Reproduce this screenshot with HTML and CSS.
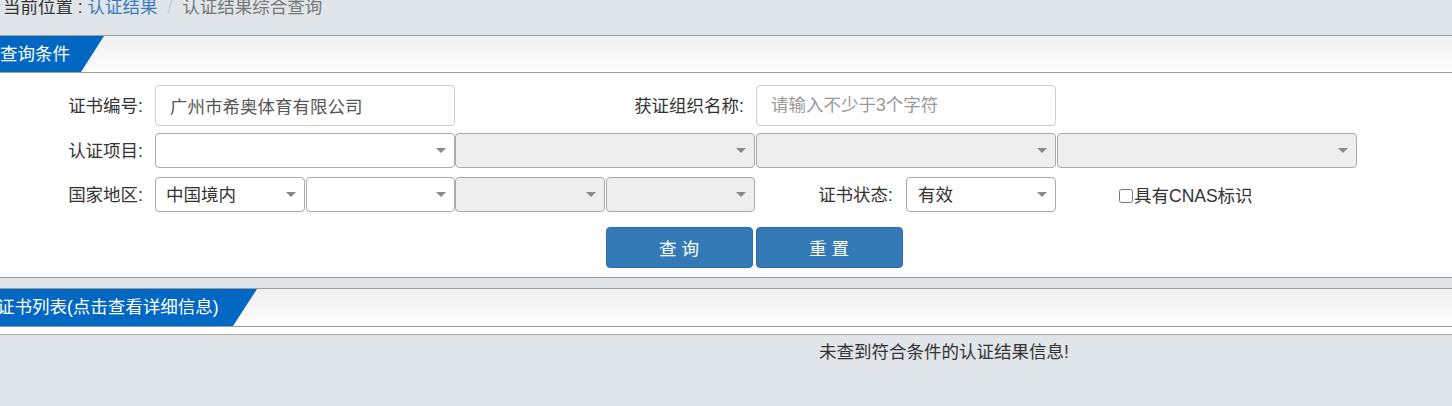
FILE: index.html
```html
<!DOCTYPE html>
<html>
  <head>
    <meta charset="UTF-8">
    <title>认证结果综合查询</title>
    <link rel="stylesheet" href="styles.css">
  </head>
  <body>

    <div class="crumb">
      <span class="crumb-here">当前位置 :</span>
      <a class="crumb-link" href="#">认证结果</a>
      <span class="crumb-sep">/</span>
      <span class="crumb-last">认证结果综合查询</span>
    </div>

    <div class="panel">
      <div class="panel-head">
        <div class="tab">查询条件</div>
      </div>
      <form class="panel-body" name="query">
        <div class="row row-1">
          <label class="lbl">证书编号:</label>
          <input class="txt" type="text" value="广州市希奥体育有限公司">
          <label class="lbl">获证组织名称:</label>
          <input class="txt" type="text" placeholder="请输入不少于3个字符">
        </div>

        <div class="row row-2">
          <label class="lbl">认证项目:</label>
          <div class="sel"><span></span><i class="arrow"></i></div>
          <div class="sel off"><span></span><i class="arrow"></i></div>
          <div class="sel off"><span></span><i class="arrow"></i></div>
          <div class="sel off"><span></span><i class="arrow"></i></div>
        </div>

        <div class="row row-3">
          <label class="lbl">国家地区:</label>
          <div class="pair">
            <div class="sel"><span>中国境内</span><i class="arrow"></i></div>
            <div class="sel"><span></span><i class="arrow"></i></div>
          </div>
          <div class="pair">
            <div class="sel off"><span></span><i class="arrow"></i></div>
            <div class="sel off"><span></span><i class="arrow"></i></div>
          </div>
          <div class="pair">
            <label class="lbl lbl-in">证书状态:</label>
            <div class="sel half"><span>有效</span><i class="arrow"></i></div>
          </div>
          <label class="check"><input type="checkbox">具有CNAS标识</label>
        </div>

        <div class="row row-4">
          <div class="btns">
            <button type="button" class="btn">查&nbsp;询</button>
            <button type="button" class="btn">重&nbsp;置</button>
          </div>
        </div>
      </form>
    </div>

    <div class="panel panel-list">
      <div class="panel-head">
        <div class="tab tab-wide">证书列表(点击查看详细信息)</div>
      </div>
      <div class="panel-body list-body"></div>
    </div>

    <div class="empty">未查到符合条件的认证结果信息!</div>

  </body>
</html>
```

FILE: styles.css
```css
:root {
  --page-bg: #e0e5e9;
  --line: #9c9c9c;
  --tab-blue: #0068c2;
  --btn-blue: #337ab7;
  --field-border: #aaa;
}

body {
  margin: 0;
  background-color: var(--page-bg);
  font-family: "Liberation Sans", "Noto Sans CJK SC", sans-serif;
  font-size: 17.5px;
  color: #333;
}

/* breadcrumb */
.crumb {
  height: 38px;
  margin-top: -3px;
  padding-left: 3px;
  line-height: 20px;
  box-sizing: border-box;
  white-space: nowrap;
}

.crumb-here {
  color: #333;
}

.crumb-link {
  color: #3a7cbf;
  text-decoration: none;
}

.crumb-sep {
  color: #ccc;
  margin: 0 5px;
}

.crumb-last {
  color: #777;
}

/* panels */
.panel-head {
  height: 36px;
  border-top: 1px solid var(--line);
  border-bottom: 1px solid var(--line);
  background: linear-gradient(#f0f0f0, #fdfdfd);
}

.panel-list {
  margin-top: 10px;
}

.panel-list .panel-head {
  height: 37px;
}

.tab {
  width: 104px;
  height: 100%;
  background-color: var(--tab-blue);
  color: #fff;
  line-height: 36px;
  white-space: nowrap;
  clip-path: polygon(0 0, 104px 0, 81px 100%, 0 100%);
}

.tab-wide {
  width: 257px;
  text-indent: -3px;
  line-height: 37px;
  clip-path: polygon(0 0, 257px 0, 233px 100%, 0 100%);
}

.panel-body {
  display: block;
  margin: 0;
  background-color: #fff;
  border-bottom: 1px solid var(--line);
  height: 204px;
  overflow: hidden;
}

.list-body {
  height: 7px;
  border-bottom-color: #aaa;
}

/* form rows */
.row {
  display: grid;
  grid-template-columns: 155px 300px 301px 301px 300px;
  align-items: center;
}

.row-1 {
  height: 41px;
  margin-top: 12px;
}

.row-2 {
  height: 35px;
  margin-top: 7px;
}

.row-3 {
  height: 35px;
  margin-top: 9px;
}

.row-4 {
  height: 41px;
  margin-top: 15px;
}

.lbl {
  text-align: right;
  padding-right: 12px;
  white-space: nowrap;
  line-height: 20px;
}

.txt {
  width: 300px;
  height: 41px;
  box-sizing: border-box;
  border: 1px solid #ccc;
  border-radius: 4px;
  padding: 0 14px;
  font-family: inherit;
  font-size: 17.5px;
  color: #555;
  outline: none;
}

.txt::placeholder {
  color: #999;
}

.sel {
  width: 300px;
  height: 35px;
  box-sizing: border-box;
  border: 1px solid var(--field-border);
  border-radius: 4px;
  background-color: #fff;
  display: flex;
  align-items: center;
  padding-left: 10px;
  color: #333;
  line-height: 20px;
}

.sel.off {
  background-color: #eee;
}

.arrow {
  margin-left: auto;
  margin-right: 8px;
  width: 0;
  height: 0;
  border-left: 5px solid transparent;
  border-right: 5px solid transparent;
  border-top: 5px solid #888;
}

.pair {
  display: flex;
  gap: 1px;
  width: 300px;
  align-items: center;
}

.pair .sel {
  flex: 1;
  width: auto;
}

.pair .sel.half {
  flex: none;
  width: 150px;
  padding-left: 11px;
}

.lbl-in {
  flex: 1;
}

.check {
  display: flex;
  align-items: center;
  padding-left: 62px;
  padding-top: 3px;
  white-space: nowrap;
  line-height: 20px;
}

.check input {
  width: 14px;
  height: 14px;
  margin: 0 1px 0 0;
}

/* buttons */
.btns {
  grid-column: 3 / span 2;
  display: flex;
  justify-content: center;
  gap: 3px;
  padding-right: 4px;
}

.btn {
  width: 147px;
  height: 41px;
  background-color: var(--btn-blue);
  border: 1px solid #2e6da4;
  border-radius: 4px;
  color: #fff;
  font-family: inherit;
  font-size: 17.5px;
  cursor: pointer;
}

.btn:hover {
  background-color: #286090;
}

/* empty result */
.empty {
  padding: 7px 0 0 436px;
  text-align: center;
  line-height: 20px;
  color: #333;
}
```
